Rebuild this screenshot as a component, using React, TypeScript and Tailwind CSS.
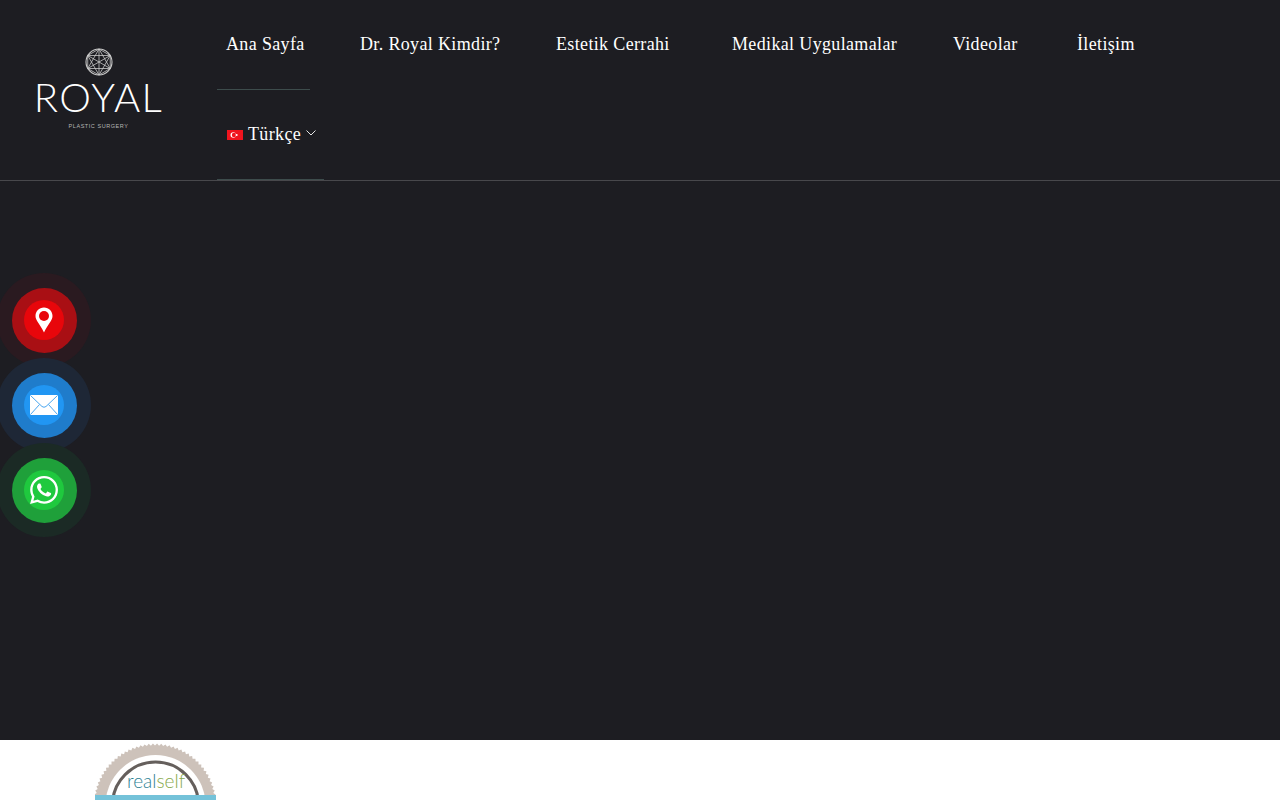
import React from "react";

const items = [
  { label: "Ana Sayfa", w: "w-[93px]", border: "border-[#3d4c4c]" },
  { label: "Dr. Royal Kimdir?", w: "w-[155px]", border: "border-transparent" },
  { label: "Estetik Cerrahi", w: "w-[135px]", border: "border-transparent" },
  { label: "Medikal Uygulamalar", w: "w-[180px]", border: "border-transparent" },
  { label: "Videolar", w: "w-[83px]", border: "border-transparent" },
  { label: "İletişim", w: "w-[76px]", border: "border-transparent" },
];

function FlowerMark() {
  const hex = [0, 60, 120, 180, 240, 300].map((a) => {
    const r = (a * Math.PI) / 180 - Math.PI / 2;
    return [14 + 13 * Math.cos(r), 14 + 13 * Math.sin(r)];
  });
  return (
    <svg width="28" height="28" viewBox="0 0 28 28" fill="none" stroke="#c9c9c9" strokeWidth="0.8">
      <circle cx="14" cy="14" r="13" strokeWidth="1.1" />
      {hex.map(([x, y], i) => (
        <line key={i} x1="14" y1="14" x2={x} y2={y} />
      ))}
      {hex.map(([x, y], i) => {
        const [a, b] = hex[(i + 2) % 6];
        return <line key={"t" + i} x1={x} y1={y} x2={a} y2={b} />;
      })}
      {hex.map(([x, y], i) => {
        const [a, b] = hex[(i + 1) % 6];
        return <line key={"h" + i} x1={x} y1={y} x2={a} y2={b} />;
      })}
    </svg>
  );
}

function Logo() {
  return (
    <div className="flex flex-col items-center pt-[48px] w-[197px]">
      <FlowerMark />
      <div className="mt-[4px] h-[34px] text-[40px] leading-[34px] font-light text-white tracking-[1.5px] font-['Lato',sans-serif]">
        ROYAL
      </div>
      <div className="mt-[9px] text-[5.5px] leading-[7px] tracking-[0.55px] text-[#b5b5b5] font-['Liberation_Sans',sans-serif] whitespace-nowrap">
        PLASTIC SURGERY
      </div>
    </div>
  );
}

function Flag() {
  return (
    <svg width="16" height="10" viewBox="0 0 16 10" className="shrink-0">
      <rect width="16" height="10" fill="#f0141e" />
      <circle cx="6.3" cy="5" r="2.8" fill="#fff" />
      <circle cx="7" cy="5" r="2.2" fill="#f0141e" />
      <circle cx="9.6" cy="5" r="1.1" fill="#fff" />
    </svg>
  );
}

function Bubble({ top, halo, mid, inner, children }: { top: string; halo: string; mid: string; inner: string; children: React.ReactNode }) {
  return (
    <div className={`absolute left-[-3px] ${top} w-[94px] h-[94px] rounded-full flex items-center justify-center ${halo}`}>
      <div className={`w-[65px] h-[65px] rounded-full flex items-center justify-center ${mid}`}>
        <div className={`w-[40px] h-[40px] rounded-full flex items-center justify-center ${inner}`}>{children}</div>
      </div>
    </div>
  );
}

function Badge() {
  const teeth = 46;
  const pts: string[] = [];
  for (let i = 0; i <= teeth * 2; i++) {
    const a = Math.PI + (i / (teeth * 2)) * Math.PI;
    const r = i % 2 ? 61.5 : 59.5;
    pts.push(`${60 + r * Math.cos(a)},${66 + r * Math.sin(a)}`);
  }
  return (
    <svg width="121" height="60" viewBox="0 0 121 60" className="ml-[95px] mt-[0px] block">
      <polygon points={pts.join(" ")} fill="#cdc2ba" transform="translate(0,-1)" />
      <circle cx="60.5" cy="65" r="50" fill="#ffffff" />
      <circle cx="60.5" cy="65" r="43" fill="#ffffff" stroke="#655f5c" strokeWidth="3" />
      <text x="32" y="48" fontSize="19" fontFamily="Lato, sans-serif" fontWeight="300" fill="#2d7f93">
        real<tspan fill="#86a94c">self</tspan>
      </text>
      <rect x="0" y="55" width="121" height="5" fill="#74c2d9" />
    </svg>
  );
}

export default function App() {
  return (
    <div className="relative h-screen overflow-hidden bg-white font-['Liberation_Serif',serif]">
      <div className="h-[740px] bg-[#1d1d22]">
        <header className="h-[181px] flex border-b border-[#48484c]">
          <div className="w-[217px] shrink-0">
            <Logo />
          </div>
          <nav className="w-[1000px] flex flex-wrap content-start gap-x-[41px]">
            {items.map((it) => (
              <a
                key={it.label}
                className={`${it.w} h-[90px] border-b ${it.border} flex items-center pl-[9px] pb-[1px] text-white text-[18px] tracking-[0.35px] whitespace-nowrap`}
              >
                {it.label}
              </a>
            ))}
            <a className="w-[107px] h-[90px] border-b border-[#3d4c4c] flex items-center pl-[10px] pb-[1px] text-white text-[18px] tracking-[0.35px] whitespace-nowrap">
              <span className="mt-[2px] mr-[5px]"><Flag /></span>
              Türkçe
              <svg width="10" height="6" viewBox="0 0 10 6" fill="none" stroke="#e5e5e5" strokeWidth="1" className="ml-[5px] mb-[2px]">
                <path d="M0.5 0.5 L5 5 L9.5 0.5" />
              </svg>
            </a>
          </nav>
        </header>
      </div>
      <Badge />

      <Bubble top="top-[273px]" halo="bg-[#2a1a20]" mid="bg-[#a90f14]" inner="bg-[#e8060b]">
        <svg width="18" height="26" viewBox="0 0 18 26">
          <path d="M9 0.5 C4 0.5 0.5 4.3 0.5 9 C0.5 13.5 5 17 9 25.5 C13 17 17.5 13.5 17.5 9 C17.5 4.3 14 0.5 9 0.5 Z" fill="#ffffff" />
          <circle cx="9" cy="9" r="5" fill="#e8060b" />
        </svg>
      </Bubble>
      <Bubble top="top-[358px]" halo="bg-[#1e2736]" mid="bg-[#1f7ccb]" inner="bg-[#2196f3]">
        <svg width="28" height="20" viewBox="0 0 28 20">
          <rect width="28" height="20" rx="1" fill="#ffffff" />
          <path d="M0.5 0.5 L12 11.5 Q14 13 16 11.5 L27.5 0.5 M0.5 19.5 L9.5 9.5 M27.5 19.5 L18.5 9.5" fill="none" stroke="#4aa6ef" strokeWidth="1" />
        </svg>
      </Bubble>
      <Bubble top="top-[443px]" halo="bg-[#1b2a25]" mid="bg-[#1fa03a]" inner="bg-[#1fc93e]">
        <svg width="28" height="28" viewBox="0 0 24 24" fill="#ffffff">
          <path d="M17.472 14.382c-.297-.149-1.758-.867-2.03-.967-.273-.099-.471-.148-.67.15-.197.297-.767.966-.94 1.164-.173.199-.347.223-.644.075-.297-.15-1.255-.463-2.39-1.475-.883-.788-1.48-1.761-1.653-2.059-.173-.297-.018-.458.13-.606.134-.133.298-.347.446-.52.149-.174.198-.298.298-.497.099-.198.05-.371-.025-.52-.075-.149-.669-1.612-.916-2.207-.242-.579-.487-.5-.669-.51-.173-.008-.371-.01-.57-.01-.198 0-.52.074-.792.372-.272.297-1.04 1.016-1.04 2.479 0 1.462 1.065 2.875 1.213 3.074.149.198 2.096 3.2 5.077 4.487.709.306 1.262.489 1.694.625.712.227 1.36.195 1.871.118.571-.085 1.758-.719 2.006-1.413.248-.694.248-1.289.173-1.413-.074-.124-.272-.198-.57-.347m-5.421 7.403h-.004a9.87 9.87 0 01-5.031-1.378l-.361-.214-3.741.982.998-3.648-.235-.374a9.86 9.86 0 01-1.51-5.26c.001-5.45 4.436-9.884 9.888-9.884 2.64 0 5.122 1.03 6.988 2.898a9.825 9.825 0 012.893 6.994c-.003 5.45-4.437 9.884-9.885 9.884m8.413-18.297A11.815 11.815 0 0012.05 0C5.495 0 .16 5.335.157 11.892c0 2.096.547 4.142 1.588 5.945L.057 24l6.305-1.654a11.882 11.882 0 005.683 1.448h.005c6.554 0 11.89-5.335 11.893-11.893a11.821 11.821 0 00-3.48-8.413z" />
        </svg>
      </Bubble>
    </div>
  );
}
